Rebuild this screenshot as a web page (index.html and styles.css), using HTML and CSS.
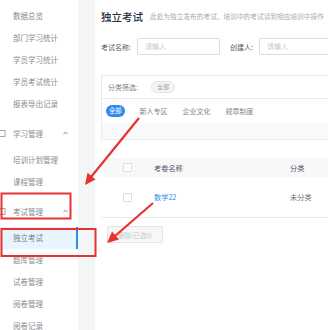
FILE: index.html
```html
<!DOCTYPE html>
<html lang="zh">

<head>
    <meta charset="UTF-8">
    <meta name="viewport" content="width=device-width, initial-scale=1.0">
    <title>独立考试</title>
    <link rel="stylesheet" href="styles.css">
</head>

<body>

    <div class="layout">
        <aside class="sidebar">
            <ul class="menu">
                <li class="menu-item">数据总览</li>
                <li class="menu-item">部门学习统计</li>
                <li class="menu-item">学员学习统计</li>
                <li class="menu-item">学员考试统计</li>
                <li class="menu-item">报表导出记录</li>
                <li class="menu-group">
                    <div class="group-title">
                        <svg class="group-icon" width="6" height="7" viewBox="0 0 6 7"><rect x="-2" y="0.5" width="7" height="6" fill="none" stroke="#a5a5a5" stroke-width="1"/></svg>
                        <span>学习管理</span>
                        <svg class="caret" width="5" height="4" viewBox="0 0 5 4"><path d="M0.5 3.2 L2.5 1 L4.5 3.2" fill="none" stroke="#888" stroke-width="1"/></svg>
                    </div>
                    <ul class="submenu">
                        <li class="menu-item">培训计划管理</li>
                        <li class="menu-item">课程管理</li>
                    </ul>
                </li>
                <li class="menu-group">
                    <div class="group-title">
                        <svg class="group-icon" width="6" height="7" viewBox="0 0 6 7"><rect x="-2" y="0.5" width="7" height="6" fill="none" stroke="#a5a5a5" stroke-width="1"/></svg>
                        <span>考试管理</span>
                        <svg class="caret" width="5" height="4" viewBox="0 0 5 4"><path d="M0.5 3.2 L2.5 1 L4.5 3.2" fill="none" stroke="#888" stroke-width="1"/></svg>
                    </div>
                    <ul class="submenu">
                        <li class="menu-item active">独立考试</li>
                        <li class="menu-item">题库管理</li>
                        <li class="menu-item">试卷管理</li>
                        <li class="menu-item">阅卷管理</li>
                        <li class="menu-item">阅卷记录</li>
                    </ul>
                </li>
            </ul>
        </aside>

        <main class="main">
            <div class="page-head">
                <h1>独立考试</h1>
                <span class="page-tip">此处为独立发布的考试，培训中的考试请到相应培训中操作</span>
            </div>

            <div class="search">
                <label>考试名称:</label>
                <div class="input">请输入</div>
                <label class="label-gap">创建人:</label>
                <div class="input input-wide">请输入</div>
            </div>

            <div class="filter-panel">
                <div class="filter-row">
                    <span class="filter-label">分类筛选:</span>
                    <span class="chip">全部</span>
                </div>
                <div class="tabs">
                    <span class="pill">全部</span>
                    <span class="tab">新人专区</span>
                    <span class="tab">企业文化</span>
                    <span class="tab">规章制度</span>
                </div>
                <div class="filter-foot"></div>
            </div>

            <div class="exam-table">
                <div class="table-row table-head">
                    <div class="cell-check"><span class="checkbox"></span></div>
                    <div>考卷名称</div>
                    <div>分类</div>
                </div>
                <div class="table-row">
                    <div class="cell-check"><span class="checkbox"></span></div>
                    <div class="link">数学22</div>
                    <div>未分类</div>
                </div>
            </div>

            <button class="btn-delete" disabled>删除(已选0)</button>
        </main>
    </div>

    <!-- red annotations drawn over the screenshot -->
    <svg class="marks" width="328" height="330" viewBox="0 0 328 330">
        <rect x="1.5" y="193.5" width="69" height="25" fill="none" stroke="#e8322f" stroke-width="2"/>
        <rect x="1.5" y="229" width="94" height="27" fill="none" stroke="#e8322f" stroke-width="2"/>
        <line x1="139" y1="118" x2="91" y2="177" stroke="#e8322f" stroke-width="2.2"/>
        <polygon points="85,185 95.5,179.5 87.5,172.8" fill="#e8322f"/>
        <line x1="153" y1="203" x2="115" y2="236" stroke="#e8322f" stroke-width="2.2"/>
        <polygon points="107,243 119,239.5 112,231.5" fill="#e8322f"/>
    </svg>

</body>

</html>
```

FILE: styles.css
```css
body {
    margin: 0;
    font-family: "Noto Sans CJK SC", "Noto Sans", sans-serif;
    background-color: #f4f5f7;
    color: #515a6e;
    overflow: hidden;
}

ul {
    list-style: none;
    margin: 0;
    padding: 0;
}

.layout {
    display: flex;
    height: 330px;
}

/* sidebar */

.sidebar {
    width: 78px;
    flex-shrink: 0;
    background-color: #fff;
    padding-top: 5px;
}

.menu-item {
    height: 22px;
    line-height: 22px;
    padding-left: 13px;
    font-size: 7.5px;
    color: #888b90;
    white-space: nowrap;
}

.menu-item.active {
    background-color: #e8f4fe;
    border-right: 2px solid #2d8cf0;
    color: #767c86;
}

.group-title {
    display: flex;
    align-items: center;
    height: 26px;
    margin-top: 5px;
    font-size: 7.5px;
    color: #888b90;
}

.group-icon {
    margin-right: 7px;
}

.caret {
    margin-left: auto;
    margin-right: 10px;
}

.submenu {
    padding-top: 3px;
}

/* main */

.main {
    flex: 1;
    margin-left: 17px;
    background-color: #fff;
    padding: 8px 0 0 6px;
    overflow: hidden;
}

.page-head {
    display: flex;
    align-items: center;
    height: 16px;
    white-space: nowrap;
}

.page-head h1 {
    margin: 0;
    font-size: 10.5px;
    font-weight: 500;
    color: #1f2d3d;
}

.page-tip {
    margin-left: 7px;
    font-size: 6.7px;
    color: #a8abb3;
}

.search {
    display: flex;
    align-items: center;
    margin-top: 14px;
    height: 17px;
    font-size: 7px;
    white-space: nowrap;
}

.search label {
    color: #515a6e;
    margin-right: 6px;
}

.search .label-gap {
    margin-left: 10px;
}

.input {
    box-sizing: border-box;
    width: 83px;
    height: 17px;
    line-height: 15px;
    border: 1px solid #dcdee2;
    border-radius: 2px;
    padding-left: 7px;
    color: #c5c8ce;
    flex-shrink: 0;
}

.input-wide {
    width: 90px;
}

.filter-panel {
    margin-top: 20px;
    border: 1px solid #e8eaec;
    border-right: none;
    border-radius: 2px 0 0 2px;
}

.filter-row {
    display: flex;
    align-items: center;
    height: 22px;
    padding-left: 6px;
    border-bottom: 1px solid #e8eaec;
    font-size: 7px;
}

.filter-label {
    color: #80848f;
}

.chip {
    margin-left: 13px;
    padding: 0 5px;
    height: 10px;
    line-height: 10px;
    border: 1px solid #e3e3e3;
    border-radius: 6px;
    background-color: #f5f5f5;
    font-size: 6.2px;
    color: #a3a3a3;
}

.tabs {
    display: flex;
    align-items: center;
    gap: 15px;
    height: 24px;
    padding-left: 4px;
    font-size: 7px;
    color: #80848f;
    white-space: nowrap;
}

.pill {
    height: 12px;
    line-height: 12px;
    padding: 0 3px;
    border-radius: 6px;
    background-color: #2d8cf0;
    color: #fff;
    font-size: 6.3px;
}

.filter-foot {
    height: 16px;
    background-color: #f8f9fb;
}

.exam-table {
    margin-top: 18px;
    margin-left: 1px;
    font-size: 7.2px;
}

.table-row {
    display: grid;
    grid-template-columns: 52px 136px 1fr;
    align-items: center;
    height: 40px;
    border-bottom: 1px solid #e8eaec;
    color: #6b7180;
}

.table-row.table-head {
    height: 19px;
    background-color: #f8f8f9;
    border-bottom: none;
    color: #515a6e;
}

.cell-check {
    padding-left: 21px;
    display: flex;
}

.checkbox {
    box-sizing: border-box;
    width: 9px;
    height: 9px;
    border: 1px solid #dcdee2;
    border-radius: 1px;
    background-color: #fff;
}

.link {
    color: #2d8cf0;
}

.btn-delete {
    display: block;
    box-sizing: border-box;
    width: 56px;
    height: 17px;
    margin: 8px 0 0 6px;
    padding: 0;
    border: 1px solid #e3e5e8;
    border-radius: 2px;
    background-color: #f7f7f7;
    font-family: inherit;
    font-size: 6.5px;
    color: #c5c8ce;
}

.marks {
    position: absolute;
    left: 0;
    top: 0;
    pointer-events: none;
}
```
